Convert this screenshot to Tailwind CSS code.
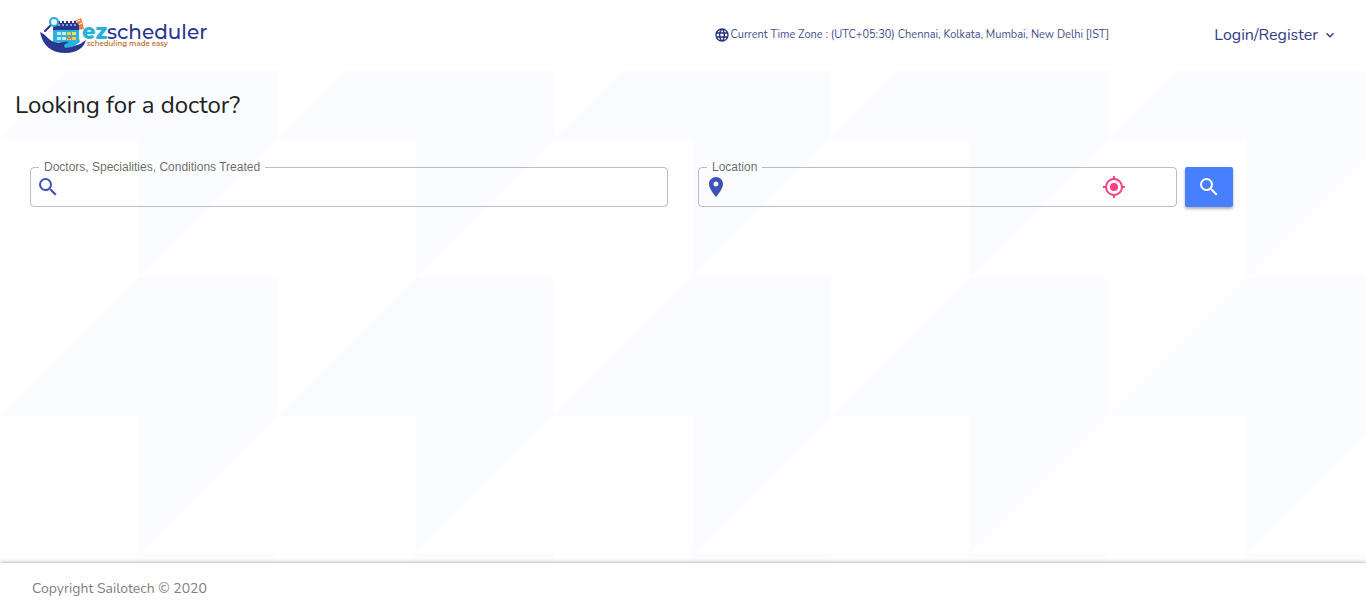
<!DOCTYPE html>
<html lang="en">
<head>
<meta charset="utf-8">
<meta name="viewport" content="width=device-width, initial-scale=1">
<title>ezscheduler</title>
<script src="https://cdn.jsdelivr.net/npm/@tailwindcss/browser@4"></script>
</head>
<body class="flex min-h-screen flex-col bg-[#fefefe] font-['Nunito','Open_Sans',sans-serif] text-[#212121]">
<header class="flex h-[70px] items-center bg-white pr-7 pl-10 text-[#343d82]">
  <a href="#" aria-label="ezscheduler, scheduling made easy" class="mr-auto flex items-center">
    <svg class="h-9 w-[170px]" viewBox="0 0 170 36">
      <path d="M34 4l7-3 1 3 2 8-7 1z" fill="#f07f47"/>
      <path d="M36 5l4-2M38 8l4-2" stroke="#fff" stroke-width="1"/>
      <path d="M13 12h26v13l-7 6H19l-6-5z" fill="#2bb2dc"/>
      <path d="M13 13V9q0-3 3-3h20q3 0 3 3v4z" fill="#283890"/>
      <path d="M19 4v4M23 4v4M27 4v4M31 4v4M35 4v4" stroke="#283890" stroke-width="2"/>
      <path d="M19 7v2M23 7v2M27 7v2M31 7v2M35 7v2" stroke="#fff" stroke-width="1"/>
      <circle cx="14" cy="5" r="4" fill="#eaf8fd" stroke="#2aa9d5" stroke-width="2"/>
      <path d="M10 9l-5 5" stroke="#27317b" stroke-width="2" stroke-linecap="round"/>
      <path d="M17 15h4v3h-4zM22 15h4v3h-4zM17 20h4v3h-4zM22 20h4v3h-4zM17 25h4v2h-4z" fill="#c2edf5"/>
      <path d="M27 15h4v3h-4zM32 20h4v3h-4zM22 25h4v2h-4z" fill="#f7cf35"/>
      <path d="M32 15h4v3h-4zM27 20h4v3h-4z" fill="#f3df68"/>
      <path d="M27 20l2 2 3-3" fill="none" stroke="#e36f36" stroke-width="1.300"/>
      <path d="M0 15c7 3 8 8 14 10 5 2 9-1 14 0h7l-8 4 4 1 9-3 6-4c-2 8-10 13-20 13C11 36 3 29 0 15z" fill="#283890"/>
      <path d="M24 28c4-3 6-3 10-4l5-3 1 4-8 5-7 1z" fill="#2bb2dc"/>
      <text x="42" y="22" font-family="Montserrat, Inter, sans-serif" font-size="21" font-weight="800" fill="#29b0da">ez</text>
      <text x="67" y="22" font-family="Montserrat, Inter, sans-serif" font-size="20" font-weight="500" fill="#283890">scheduler</text>
      <text x="47" y="29" font-family="Montserrat, Inter, sans-serif" font-size="7" font-weight="600" fill="#c07a3c">scheduling made easy</text>
    </svg>
  </a>
  <p class="flex items-center text-[11px] text-[#464e8c]">
    <svg class="size-4 text-[#27317b]" viewBox="0 0 24 24" fill="currentColor"><path d="M12 2C6.500 2 2 6.500 2 12s4.500 10 10 10 10-4.500 10-10S17.500 2 12 2zm6.900 6h-2.900a15.700 15.700 0 0 0-1.400-3.600A8 8 0 0 1 18.900 8zM12 4c.8 1.200 1.500 2.500 1.900 4h-3.800c.4-1.500 1.100-2.800 1.900-4zM4.300 14a8 8 0 0 1 0-4h3.300a16.500 16.500 0 0 0 0 4zm.8 2H8c.3 1.300.8 2.500 1.400 3.600A8 8 0 0 1 5.100 16zM8 8H5.100a8 8 0 0 1 4.300-3.600A15.700 15.700 0 0 0 8 8zm4 12c-.8-1.200-1.500-2.500-1.900-4h3.800c-.4 1.500-1.100 2.800-1.900 4zm2.300-6H9.700a14.700 14.700 0 0 1 0-4h4.600a14.700 14.700 0 0 1 0 4zm.3 5.600c.6-1.100 1.100-2.300 1.400-3.600h2.900a8 8 0 0 1-4.300 3.600zM16.400 14a16.500 16.500 0 0 0 0-4h3.300a8 8 0 0 1 0 4z"/></svg>
    <span>Current Time Zone : (UTC+05:30) Chennai, Kolkata, Mumbai, New Delhi [IST]</span>
  </p>
  <button type="button" class="ml-[105px] flex items-center gap-1 text-base">
    Login/Register
    <svg class="size-4" viewBox="0 0 24 24" fill="currentColor"><path d="M7.400 8.600 12 13.200l4.600-4.600L18 10l-6 6-6-6z"/></svg>
  </button>
</header>

<main class="relative isolate flex-1 px-[15px] pt-5">
  <svg class="absolute inset-0 -z-10 size-full" aria-hidden="true">
    <defs>
      <pattern id="tiles" width="277" height="277" y="-70" patternUnits="userSpaceOnUse">
        <path d="M139 0H277V139L139 277V139H0z" fill="#fafcff"/>
      </pattern>
    </defs>
    <rect width="100%" height="100%" fill="url(#tiles)"/>
  </svg>
  <h1 class="text-2xl leading-[30px]">Looking for a doctor?</h1>
  <form class="mt-10 flex">
    <div class="w-1/2 px-[15px]">
      <fieldset class="h-[47px] rounded border border-black/25 px-2">
        <legend class="px-[5px] font-['Liberation_Sans',sans-serif] text-xs leading-[14px] text-black/60"><label for="doctor">Doctors, Specialities, Conditions Treated</label></legend>
        <div class="flex items-center pt-px">
          <svg class="-ml-1 size-6 shrink-0 text-[#3f51b5]" viewBox="-1 0 24 24" fill="currentColor"><path d="M15.500 14h-.79l-.28-.27A6.470 6.470 0 0 0 16 9.500 6.500 6.500 0 1 0 9.500 16c1.610 0 3.090-.59 4.230-1.570l.27.28v.79l5 4.990L20.490 19l-4.990-5zm-6 0C7.010 14 5 11.990 5 9.500S7.010 5 9.500 5 14 7.010 14 9.500 11.990 14 9.500 14z"/></svg>
          <input id="doctor" type="text" class="h-6 min-w-0 flex-1 px-2 outline-none">
        </div>
      </fieldset>
    </div>
    <div class="flex flex-1 items-end gap-2 pr-[118px] pl-[15px]">
      <fieldset class="h-[47px] min-w-0 flex-1 rounded border border-black/25 px-2">
        <legend class="px-[5px] font-['Liberation_Sans',sans-serif] text-xs leading-[14px] text-black/60"><label for="location">Location</label></legend>
        <div class="flex items-center pt-px">
          <svg class="-ml-1 size-6 shrink-0 text-[#3f51b5]" viewBox="-1 0 24 24" fill="currentColor"><path d="M12 2C8.130 2 5 5.130 5 9c0 5.250 7 13 7 13s7-7.750 7-13c0-3.870-3.130-7-7-7zm0 9.500a2.500 2.500 0 1 1 0-5 2.500 2.500 0 0 1 0 5z"/></svg>
          <input id="location" type="text" class="h-6 min-w-0 flex-1 px-2 outline-none">
          <button type="button" aria-label="Use my location" class="mr-[42px] text-[#ff4081]">
            <svg class="size-6" viewBox="0 0 24 24" fill="currentColor"><path d="M12 8a4 4 0 1 0 0 8 4 4 0 0 0 0-8zm8.940 3A8.990 8.990 0 0 0 13 3.060V1h-2v2.060A8.990 8.990 0 0 0 3.060 11H1v2h2.060A8.990 8.990 0 0 0 11 20.940V23h2v-2.060A8.990 8.990 0 0 0 20.940 13H23v-2h-2.060zM12 19a7 7 0 1 1 0-14 7 7 0 0 1 0 14z"/></svg>
          </button>
        </div>
      </fieldset>
      <button type="submit" aria-label="Search" class="flex h-10 w-12 items-center justify-center rounded-xs bg-[#467fff] text-white shadow-[0_2px_3px_rgba(0,0,0,0.3)]">
        <svg class="size-6" viewBox="0 0 24 24" fill="currentColor"><path d="M15.500 14h-.79l-.28-.27A6.470 6.470 0 0 0 16 9.500 6.500 6.500 0 1 0 9.500 16c1.610 0 3.090-.59 4.230-1.570l.27.28v.79l5 4.990L20.490 19l-4.990-5zm-6 0C7.010 14 5 11.990 5 9.500S7.010 5 9.500 5 14 7.010 14 9.500 11.990 14 9.500 14z"/></svg>
      </button>
    </div>
  </form>
</main>

<footer class="relative z-10 flex h-[50px] items-center bg-white px-8 pt-0.5 text-sm text-[#808080] shadow-[0_0_4px_rgba(0,0,0,0.4)]">Copyright Sailotech © 2020</footer>
</body>
</html>
